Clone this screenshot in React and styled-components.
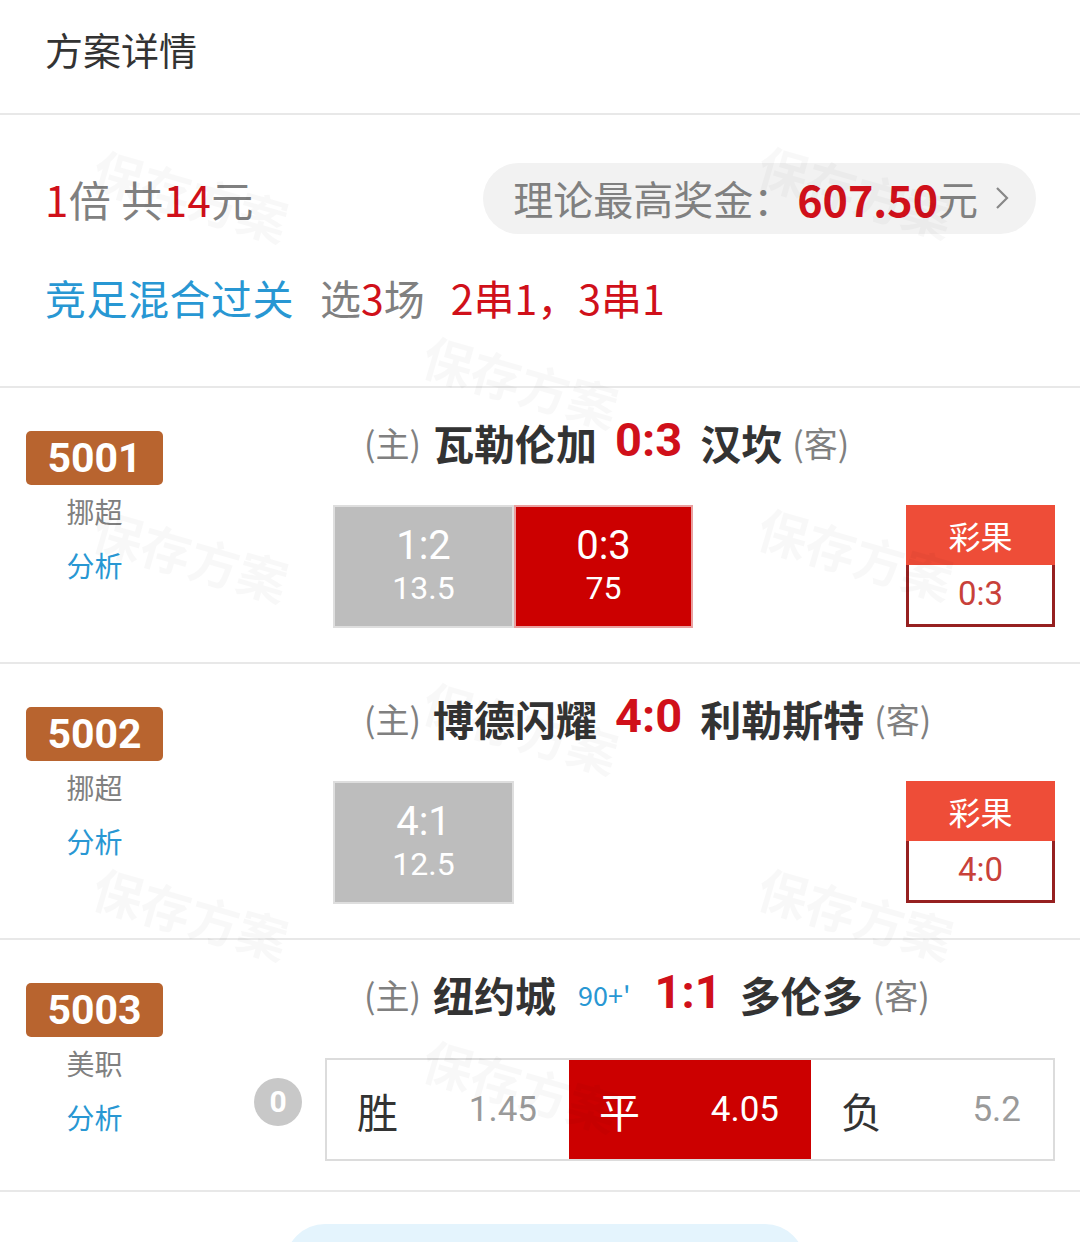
import React from "react"
import styled, { createGlobalStyle } from "styled-components"

const colors = {
  red: '#d0101a',
  boxRed: '#cc0000',
  blue: '#2897d3',
  gray: '#808080',
  dark: '#333333',
  line: '#e8e8e8',
  badge: '#b8642f',
  result: '#ee4d38',
  resultBorder: '#962020',
};

const numberFont = '"Roboto", "Noto Sans", sans-serif';

const GlobalStyle = createGlobalStyle`
  html, body {
    margin: 0;
    padding: 0;
    background: #fff;
    font-family: "Noto Sans CJK SC", "Noto Sans", sans-serif;
    overflow: hidden;
  }
`;

const matches = [
  {
    id: '5001',
    league: '挪超',
    home: '瓦勒伦加',
    away: '汉坎',
    score: '0:3',
    picks: [
      { label: '1:2', odds: '13.5', hit: false },
      { label: '0:3', odds: '75', hit: true },
    ],
    result: '0:3',
  },
  {
    id: '5002',
    league: '挪超',
    home: '博德闪耀',
    away: '利勒斯特',
    score: '4:0',
    picks: [{ label: '4:1', odds: '12.5', hit: false }],
    result: '4:0',
  },
  {
    id: '5003',
    league: '美职',
    home: '纽约城',
    away: '多伦多',
    score: '1:1',
    minute: "90+'",
    handicap: '0',
    odds: [
      { label: '胜', odds: '1.45', hit: false },
      { label: '平', odds: '4.05', hit: true },
      { label: '负', odds: '5.2', hit: false },
    ],
  },
];

const watermarks = [
  [105, 132], [770, 128], [435, 318],
  [105, 492], [770, 490], [435, 664],
  [105, 850], [770, 850], [435, 1022],
];

const App = () => (
  <Page>
    <GlobalStyle />
    <Header>方案详情</Header>
    <Summary>
      <SummaryRow>
        <Total>
          <Red>1</Red>倍 共<Red>14</Red>元
        </Total>
        <PrizePill>
          理论最高奖金：<PrizeAmount>607.50</PrizeAmount>元
          <Chevron viewBox="0 0 16 26">
            <path d="M3 3 L13 13 L3 23" fill="none" stroke="#888" strokeWidth="2.2" />
          </Chevron>
        </PrizePill>
      </SummaryRow>
      <PlayRow>
        <PlayType>竞足混合过关</PlayType>
        <span>选<Red>3</Red>场</span>
        <Red>2串1，3串1</Red>
      </PlayRow>
    </Summary>

    {matches.map(m => (
      <MatchRow key={m.id} compact={!!m.odds}>
        <LeftCol>
          <Badge>{m.id}</Badge>
          <League>{m.league}</League>
          <Analysis>分析</Analysis>
        </LeftCol>
        <MainCol>
          <TitleRow>
            <Side>(主)</Side>
            <Team>{m.home}</Team>
            {m.minute && <Minute>{m.minute}</Minute>}
            <Score>{m.score}</Score>
            <Team>{m.away}</Team>
            <Side>(客)</Side>
          </TitleRow>
          {m.picks && (
            <PickRow>
              <Picks>
                {m.picks.map(p => (
                  <PickBox key={p.label} hit={p.hit}>
                    <PickLabel>{p.label}</PickLabel>
                    <PickOdds>{p.odds}</PickOdds>
                  </PickBox>
                ))}
              </Picks>
              <ResultBox>
                <ResultHead>彩果</ResultHead>
                <ResultValue>{m.result}</ResultValue>
              </ResultBox>
            </PickRow>
          )}
          {m.odds && (
            <OddsRow>
              <Handicap>{m.handicap}</Handicap>
              <OddsBar>
                {m.odds.map(o => (
                  <OddsCell key={o.label} hit={o.hit}>
                    <OddsLabel>{o.label}</OddsLabel>
                    <OddsValue $muted={!o.hit}>{o.odds}</OddsValue>
                  </OddsCell>
                ))}
              </OddsBar>
            </OddsRow>
          )}
        </MainCol>
      </MatchRow>
    ))}

    <Footer>
      <FooterButton />
    </Footer>

    {watermarks.map(([x, y]) => (
      <Watermark key={`${x}-${y}`} style={{ left: x, top: y }}>保存方案</Watermark>
    ))}
  </Page>
);

const Page = styled.div`
  position: relative;
  width: 1080px;
  height: 1242px;
  overflow: hidden;
  background: #fff;
`;

const Header = styled.div`
  height: 115px;
  box-sizing: border-box;
  padding: 22px 0 0 45px;
  font-size: 38px;
  line-height: 54px;
  color: ${colors.dark};
  border-bottom: 2px solid ${colors.line};
`;

const Summary = styled.div`
  height: 273px;
  box-sizing: border-box;
  padding: 47px 44px 0 45px;
  border-bottom: 2px solid ${colors.line};
`;

const SummaryRow = styled.div`
  display: flex;
  align-items: center;
  justify-content: space-between;
  height: 72px;
`;

const Red = styled.span`
  color: ${colors.red};
`;

const Total = styled.div`
  font-size: 42px;
  color: ${colors.gray};
  letter-spacing: 0.5px;
`;

const PrizePill = styled.div`
  display: flex;
  align-items: center;
  height: 71px;
  padding: 0 26px 0 30px;
  border-radius: 36px;
  background: #f2f2f2;
  font-size: 40px;
  color: ${colors.gray};
`;

const PrizeAmount = styled.span`
  color: ${colors.red};
  font-weight: 700;
  font-size: 43px;
  margin-left: 4px;
`;

const Chevron = styled.svg`
  width: 16px;
  height: 26px;
  margin-left: 16px;
`;

const PlayRow = styled.div`
  display: flex;
  align-items: center;
  gap: 26px;
  margin-top: 33px;
  font-size: 41px;
  color: ${colors.gray};
`;

const PlayType = styled.span`
  color: ${colors.blue};
  letter-spacing: 0.5px;
`;

const MatchRow = styled.div`
  display: flex;
  height: ${p => p.compact ? 252 : 276}px;
  box-sizing: border-box;
  border-bottom: 2px solid ${colors.line};
`;

const LeftCol = styled.div`
  width: 190px;
  flex-shrink: 0;
  padding: 43px 0 0 26px;
  box-sizing: border-box;
  display: flex;
  flex-direction: column;
  align-items: flex-start;
`;

const Badge = styled.div`
  width: 137px;
  height: 54px;
  border-radius: 5px;
  background: ${colors.badge};
  color: #fff;
  font-family: ${numberFont};
  font-weight: 700;
  font-size: 41px;
  line-height: 54px;
  text-align: center;
`;

const League = styled.div`
  width: 137px;
  text-align: center;
  margin-top: 6px;
  font-size: 28px;
  line-height: 40px;
  color: ${colors.gray};
`;

const Analysis = styled(League)`
  margin-top: 14px;
  color: ${colors.blue};
`;

const MainCol = styled.div`
  flex: 1;
  padding: 28px 25px 0 0;
  display: flex;
  flex-direction: column;
`;

const TitleRow = styled.div`
  display: flex;
  align-items: center;
  height: 52px;
  padding-left: 174px;
  gap: 18px;
`;

const Side = styled.span`
  font-size: 34px;
  color: ${colors.gray};
  margin-right: -6px;
  &:last-child {
    margin-right: 0;
    margin-left: -8px;
  }
`;

const Team = styled.span`
  font-size: 41px;
  font-weight: 700;
  color: ${colors.dark};
`;

const Score = styled.span`
  font-family: ${numberFont};
  font-size: 47px;
  font-weight: 700;
  color: ${colors.red};
  margin-top: -6px;
`;

const Minute = styled.span`
  font-size: 27px;
  color: ${colors.blue};
  margin-left: 4px;
  margin-right: 6px;
`;

const PickRow = styled.div`
  display: flex;
  justify-content: space-between;
  align-items: flex-start;
  margin-top: 37px;
  padding-left: 143px;
`;

const Picks = styled.div`
  display: flex;
`;

const PickBox = styled.div`
  width: ${p => p.hit ? 179 : 181}px;
  height: 123px;
  box-sizing: border-box;
  border: 2px solid ${p => p.hit ? '#e9a0a0' : '#dedede'};
  background: ${p => p.hit ? colors.boxRed : '#bdbdbd'};
  color: #fff;
  display: flex;
  flex-direction: column;
  align-items: center;
  justify-content: center;
  font-family: ${numberFont};
`;

const PickLabel = styled.div`
  font-size: 40px;
  line-height: 47px;
  margin-top: -4px;
`;

const PickOdds = styled.div`
  font-size: 32px;
  line-height: 38px;
`;

const ResultBox = styled.div`
  width: 149px;
  display: flex;
  flex-direction: column;
`;

const ResultHead = styled.div`
  height: 60px;
  background: ${colors.result};
  color: #fff;
  font-size: 32px;
  line-height: 60px;
  text-align: center;
`;

const ResultValue = styled.div`
  height: 62px;
  box-sizing: border-box;
  border: 3px solid ${colors.resultBorder};
  border-top: none;
  color: #c8413a;
  font-family: ${numberFont};
  font-size: 33px;
  line-height: 58px;
  text-align: center;
`;

const OddsRow = styled.div`
  display: flex;
  align-items: center;
  margin-top: 38px;
  padding-left: 64px;
  gap: 23px;
`;

const Handicap = styled.div`
  width: 48px;
  height: 48px;
  border-radius: 50%;
  background: #c8c8c8;
  color: #fff;
  font-family: ${numberFont};
  font-weight: 700;
  font-size: 30px;
  line-height: 48px;
  text-align: center;
  flex-shrink: 0;
  margin-top: -16px;
`;

const OddsBar = styled.div`
  flex: 1;
  height: 103px;
  box-sizing: border-box;
  border: 2px solid #dcdcdc;
  display: grid;
  grid-template-columns: repeat(3, 1fr);
`;

const OddsCell = styled.div`
  display: flex;
  align-items: center;
  justify-content: space-between;
  padding: 0 32px 0 30px;
  background: ${p => p.hit ? colors.boxRed : '#fff'};
  color: ${p => p.hit ? '#fff' : colors.dark};
`;

const OddsLabel = styled.span`
  font-size: 41px;
`;

const OddsValue = styled.span`
  font-family: ${numberFont};
  font-size: 35px;
  color: ${p => p.$muted ? '#9a9a9a' : '#fff'};
`;

const Footer = styled.div`
  padding: 32px 0 0 285px;
`;

const FooterButton = styled.div`
  width: 520px;
  height: 80px;
  border-radius: 40px;
  background: #e4f4fd;
`;

const Watermark = styled.div`
  position: absolute;
  font-size: 50px;
  font-weight: 700;
  color: rgba(0, 0, 0, 0.028);
  transform: rotate(16deg);
  transform-origin: left top;
  pointer-events: none;
  white-space: nowrap;
`;

export default App;
